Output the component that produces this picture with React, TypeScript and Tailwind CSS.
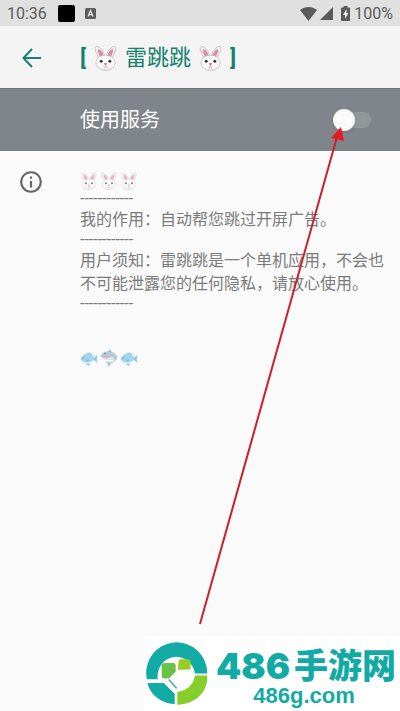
import { MdInfoOutline } from 'react-icons/md';

function Rabbit({ className }: { className: string }) {
  return (
    <svg viewBox="0 0 48 54" className={className} aria-hidden="true">
      <path
        d="M12 29C5 20 1 9 3 4c3-5 16 4 19 18zM36 29c7-9 11-20 9-25-3-5-16 4-19 18z"
        fill="#f4f1f2"
        stroke="#b9b2b5"
        strokeWidth="1.5"
      />
      <path
        d="M14 26C9 19 7 12 8 9c3-2 11 4 12 14zM34 26c5-7 7-14 6-17-3-2-11 4-12 14z"
        fill="#dc8ba3"
      />
      <ellipse cx="24" cy="37" rx="20" ry="16" fill="#fbfafa" stroke="#bdb9ba" strokeWidth="1.5" />
      <path d="M7 43c6 10 28 10 34 0-2 13-32 13-34 0z" fill="#d9d5d6" />
      <circle cx="15" cy="34" r="3" fill="#2a2526" />
      <circle cx="33" cy="34" r="3" fill="#2a2526" />
      <path d="M20 38h8l-4 5z" fill="#e5638b" />
      <path d="M24 42v3m-5 0c2 3 4 2 5 0 1 2 3 3 5 0" fill="none" stroke="#c9849a" strokeWidth="1.5" />
    </svg>
  );
}

function Fish() {
  return (
    <svg viewBox="0 0 36 30" className="h-[15px] w-[18px]" aria-hidden="true">
      <path d="M26 16l9-9c-2 6-2 12 0 17z" fill="#6db9e0" />
      <path d="M11 8c3-7 10-6 14-1l2 5z" fill="#7cc4e6" />
      <path d="M1 16C6 3 22 2 30 15 23 29 7 29 1 16z" fill="#8fcdeb" />
      <path d="M2 19c8 4 17 4 26-1-7 11-21 12-26 1z" fill="#d3edf8" />
      <path d="M13 17l6 1-4 5zM13 26l4 4 3-5z" fill="#5baed9" />
      <path d="M10 9c3 4 3 9 0 14" fill="none" stroke="#62b0d8" />
      <circle cx="6" cy="14" r="1.5" fill="#3b6580" />
    </svg>
  );
}

function Shark() {
  return (
    <svg viewBox="0 0 36 36" className="h-[18px] w-[18px]" aria-hidden="true">
      <path d="M1 13C7 2 27 1 34 14c2 6-3 10-8 12 3-5 2-8-2-8-8 2-17 1-23-5z" fill="#a9bfd0" />
      <path d="M15 5l6-4 2 6z" fill="#8ea9be" />
      <path d="M2 14c7 4 16 3 23 0l2 6c-8 3-20 2-25-6z" fill="#f3f3f5" stroke="#b99aa8" />
      <path d="M5 15l3 3 2-3 3 4 2-4 3 3 2-3 3 3" fill="none" stroke="#7990a3" />
      <path d="M26 25c-3 2-5 2-8 2l-6-3c1 4 3 5 5 6l-1 5c4-1 5-4 5-6 3 0 5-2 5-4z" fill="#71b7cd" />
      <circle cx="10" cy="9" r="1.5" fill="#33485a" />
    </svg>
  );
}

function StatusBar() {
  return (
    <div className="flex h-[26px] items-center bg-[#e0e0e0] px-[7px] pt-px text-base text-[#5c5c5c]">
      <span>10:36</span>
      <span className="ml-[11px] h-[17px] w-[17px] rounded-[2px] bg-black" />
      <svg viewBox="0 0 22 22" className="ml-[10px] h-[11px] w-[11px]" aria-hidden="true">
        <rect width="22" height="22" rx="3" fill="#5c5c5c" />
        <path d="M6 17l5-12 5 12M8 13h6" fill="none" stroke="#e8e8e8" strokeWidth="2.5" />
      </svg>
      <svg viewBox="0 0 34 28" className="ml-auto h-[14px] w-[17px]" aria-hidden="true">
        <path d="M0 6C10-2 24-2 34 6L17 28z" fill="#5a5a5a" />
      </svg>
      <svg viewBox="0 0 26 26" className="ml-[3px] h-[13px] w-[13px]" aria-hidden="true">
        <path d="M26 0v26H0z" fill="#5a5a5a" />
      </svg>
      <svg viewBox="0 0 18 30" className="mr-1 ml-2 h-[15px] w-[9px]" aria-hidden="true">
        <path d="M5 0h8v3h3q2 0 2 2v23q0 2-2 2H2q-2 0-2-2V5q0-2 2-2h3z" fill="#5a5a5a" />
        <path d="M11 6L4 18h4v8l7-12h-4z" fill="#f0f0f0" />
      </svg>
      <span>100%</span>
    </div>
  );
}

function Header() {
  return (
    <header className="flex h-[62px] items-center bg-[#f4f4f4] pt-px pl-[22px] text-[#17806d]">
      <button type="button" aria-label="返回" className="mr-[39px]">
        <svg viewBox="0 0 19 20" className="h-5 w-[19px]" fill="none" stroke="currentColor" strokeWidth="2">
          <path d="M10 1L1.5 10 10 19M1.5 10H19" />
        </svg>
      </button>
      <h1 className="flex items-center text-[22px]">
        <span className="font-bold">[</span>
        <Rabbit className="mx-2 h-[26px] w-[23px]" />
        <span>雷跳跳</span>
        <Rabbit className="mx-2 h-[26px] w-[23px]" />
        <span className="font-bold">]</span>
      </h1>
    </header>
  );
}

function ServiceRow() {
  return (
    <label className="flex h-[63px] items-center justify-between border-t border-[#6f7377] bg-[#80858b] pr-[29px] pl-20">
      <span className="text-xl text-white">使用服务</span>
      <input
        type="checkbox"
        role="switch"
        className="relative h-4 w-[34px] appearance-none rounded-full bg-[#929797] before:absolute before:-top-[3px] before:-left-1 before:h-[22px] before:w-[22px] before:rounded-full before:bg-[#fafafa] before:shadow-sm checked:before:left-4"
      />
    </label>
  );
}

function Divider() {
  return <p className="h-[18px] leading-[18px]">------------</p>;
}

function Watermark() {
  return (
    <footer className="mt-auto ml-auto flex h-[75px] w-64 items-center bg-white text-[#12aaa5]">
      <svg viewBox="0 0 186 190" className="ml-[2px] h-[63px] w-[62px] shrink-0" aria-hidden="true">
        <path d="M2 112A92 92 0 1 1 184 95h-37A55 57 0 1 0 35 112z" fill="#12aaa5" />
        <path d="M4 124h49l33 32v32C45 185 12 161 4 124z" fill="#12aaa5" />
        <path d="M94 189v-39c28-2 48-20 53-49h37c4 50-37 87-90 88z" fill="#86cf2b" />
        <path d="M47 71q0-8 9-8h25q8 0 8 8v19L70 110H55q-8 0-8-8z" fill="#67c245" />
        <path d="M98 59q0-7 7-7h20q9 0 9 8v23l-39 2z" fill="#98ce22" />
        <path d="M95 84h39l12 17-6 22-43 27-27-41z" fill="#fff" />
        <path d="M68 113l24 27" stroke="#4eb69b" strokeWidth="5" />
      </svg>
      <div className="ml-2 flex flex-col items-center pt-2 whitespace-nowrap">
        <div className="flex items-center gap-1 font-black">
          <span className="font-['Inter'] text-4xl leading-9">486</span>
          <span className="text-[34px] leading-9">手游网</span>
        </div>
        <a href="#home" className="pr-1 font-['Liberation_Sans'] text-[22px] leading-6 font-bold">
          486g.com
        </a>
      </div>
    </footer>
  );
}

export default function App() {
  return (
    <div className="relative flex min-h-screen flex-col overflow-x-hidden bg-[#fafafa] font-['Roboto','Noto_Sans_CJK_SC',sans-serif]">
      <StatusBar />
      <Header />
      <ServiceRow />
      <main className="flex items-start pt-[21px] pr-4 pb-8 text-[#7a7a7a]">
        <MdInfoOutline className="mr-9 ml-[18px] -mt-[3px] h-[26px] w-[26px] shrink-0 text-[#666]" />
        <div className="min-w-0 flex-1 text-base leading-[23px]">
          <div className="flex h-[18px] items-center gap-[2px] opacity-60">
            <Rabbit className="h-[18px] w-[18px]" />
            <Rabbit className="h-[18px] w-[18px]" />
            <Rabbit className="h-[18px] w-[18px]" />
          </div>
          <Divider />
          <p>我的作用：自动帮您跳过开屏广告。</p>
          <Divider />
          <p>用户须知：雷跳跳是一个单机应用，不会也不可能泄露您的任何隐私，请放心使用。</p>
          <Divider />
          <div className="mt-9 flex h-[18px] items-center gap-[2px] opacity-80">
            <Fish />
            <Shark />
            <Fish />
          </div>
        </div>
      </main>
      <Watermark />
      <svg
        viewBox="0 0 146 498"
        className="pointer-events-none absolute top-[127px] right-[55px] h-[498px] w-[146px]"
        aria-hidden="true"
      >
        <path d="M1 497L138 10" stroke="#c9202b" strokeWidth="2" />
        <path d="M142 0l-10 11 13 3z" fill="#e41b23" />
      </svg>
    </div>
  );
}
